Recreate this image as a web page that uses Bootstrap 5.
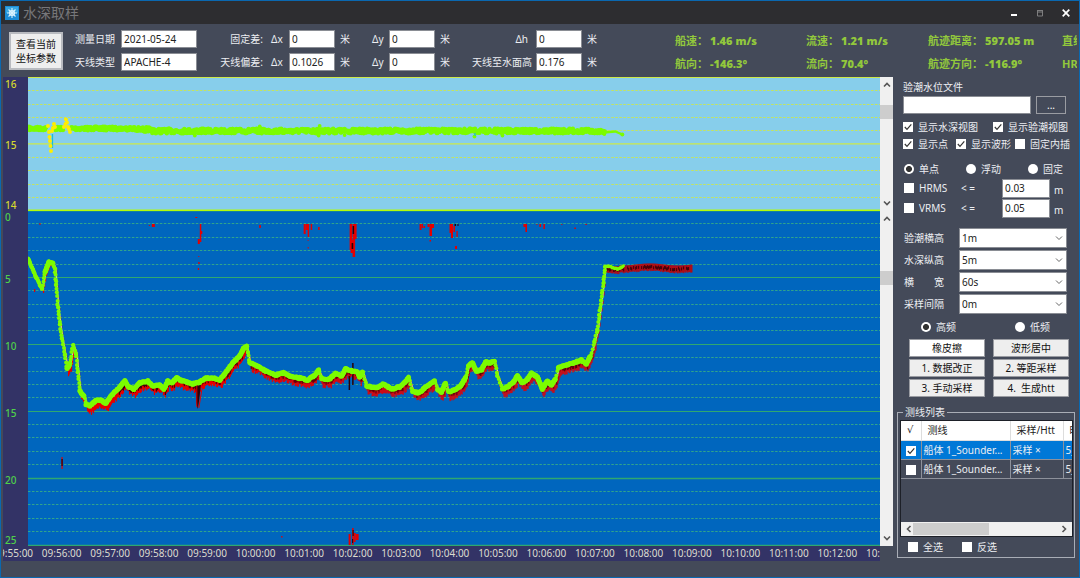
<!DOCTYPE html>
<html lang="zh-CN">
<head>
<meta charset="utf-8">
<meta name="viewport" content="width=device-width, initial-scale=1">
<title>水深取样</title>
<link href="https://cdn.jsdelivr.net/npm/bootstrap@5.3.0/dist/css/bootstrap.min.css" rel="stylesheet">
<style>
:root{--panel:#444a59;--axis:#333366;--edge:#0a68b0}
body{font:10px/12px "Noto Sans","Noto Sans CJK SC",sans-serif;color:#eceef2;background:var(--panel);border:1px solid var(--edge);min-height:100vh}
.titlebar{height:23px;background:#2d2d30;color:#77777a;font-size:14px}
.titlebar button{width:26px;height:22px}
.toolbar{height:53px;display:grid;grid-template-columns:54px 58px 76px 66px 26px 46px 37px 17px 46px 37px 64px 46px minmax(0,1fr);grid-template-rows:18px 18px;row-gap:5px;padding:6px 2px 0 8px;align-items:center;overflow:hidden}
.toolbar label{white-space:nowrap}
.unit{padding-left:5px}
.fld.form-control,.fld.form-select{font-size:10px;line-height:12px;height:18px;min-height:0;padding:0 2px;border:1px solid #8a8d94;border-radius:0;background-color:#fff;color:#222;min-width:0}
.fld.form-select{height:20px;background-image:url("data:image/svg+xml,%3Csvg xmlns='http://www.w3.org/2000/svg' viewBox='0 0 8 8'%3E%3Cpath d='M1 2.5 4 5.5 7 2.5' fill='none' stroke='%23666' /%3E%3C/svg%3E");background-size:8px 8px;background-position:right 3px center}
.winbtn{font-size:10px;line-height:14px;color:#111;background:#eee;border:1px solid #9a9ca2;padding:0;height:18px}
.multi{grid-row:1/3;height:38px;border:2px solid #b9bbc0}
.readout{grid-column:13;grid-row:1/3;display:flex;align-items:flex-start;align-self:start;overflow:hidden}
.units{display:grid;grid-template-rows:18px 18px;row-gap:5px;align-items:center;flex:none;width:90px;padding-left:5px}
.status{display:grid;grid-template-columns:131px 122px 134px 80px;grid-template-rows:22px 24px;margin-left:3px;align-items:center;color:#92c83c;font-size:11px;font-weight:700;white-space:nowrap}
.status b{margin-left:2px}
.work{display:grid;grid-template-columns:minmax(0,1fr) 186px}
.chart{display:grid;grid-template-columns:25px minmax(0,1fr) 13px;grid-template-rows:134fr 335fr 15px;padding-left:2px;min-height:0}
.chart svg.plot{width:100%;height:100%;display:block;min-height:0}
.yaxis{background:var(--axis);padding-left:2px;font-weight:500}
.tide{color:#d5d82e;padding-top:1px}
.deep{color:#4fd04a;display:grid;grid-template-rows:repeat(5,1fr)}
.deep div+div{margin-top:-5px}
.timeaxis{grid-column:1/3;background:var(--axis);overflow:hidden;color:#dcdccf}
.ticks{display:grid;grid-template-columns:repeat(19,1fr);margin:0 -30px 0 -14px;text-align:center;line-height:15px}
.vbar,.hbar{background:#f0f0f0}
.vbar svg,.hbar svg{width:8px;height:8px;fill:none;stroke:#555;stroke-width:1.6}
.vbar i{display:block;height:14px;background:#cdcdcd}
.side{padding:0 3px 0 10px}
.cells{display:flex;align-items:center;height:17px}
.radios{height:18px;padding-left:1px}
.band{height:24px;padding-left:18px}
.opt{display:flex;align-items:center;gap:5px;white-space:nowrap}
.opt .form-check-input,.lines .form-check-input{width:10px;height:10px;margin:0;flex:none;border:0;border-radius:0;background-color:#fff;background-size:10px 10px}
.opt .form-check-input[type=radio]{border-radius:50%}
.form-check-input[type=checkbox]:checked{background-image:url("data:image/svg+xml,%3Csvg xmlns='http://www.w3.org/2000/svg' viewBox='0 0 10 10'%3E%3Cpath d='M1.8 5 4 7.4 8.3 2.4' fill='none' stroke='%23333' stroke-width='1.2'/%3E%3C/svg%3E")}
.opt .form-check-input[type=radio]:checked{background-image:radial-gradient(#333 0 2.6px,#fff 3.4px)}
.rms{display:grid;grid-template-columns:58px 41px 48px 1fr;grid-auto-rows:20px;align-items:center}
.rms .opt{padding-left:1px}
.rms .fld{height:19px}
.picks{display:grid;grid-template-columns:55px 108px;grid-auto-rows:22px;align-items:center;margin:9px 0 0 1px}
.acts{display:grid;grid-template-columns:76px 76px;gap:2px 8px;margin-left:6px}
.lines{border:1px solid #a9adb6;margin:9px 0 0 -6px;padding:2px 1px 0 2px;width:178px}
.lines legend{float:none;width:auto;font-size:10px;line-height:12px;margin:0 0 0 3px;padding:0 2px}
.listbox{border:1px solid #1d2028;height:117px;overflow:hidden}
.listbox table{table-layout:fixed;width:260px;margin:0;color:#eceef2;border-collapse:collapse}
.listbox th,.listbox td{height:19px;padding:0 2px;border-right:1px solid #8d919b;border-bottom:1px solid #8d919b;white-space:nowrap;overflow:hidden}
.listbox th{background:#fff;color:#222;font-weight:400;border-color:#ddd;padding-left:6px}
.listbox th:first-child{font-family:"DejaVu Sans",sans-serif}
.listbox .cur td{background:#0078d7}
.hbar{height:14px}
.hbar i{width:76px;height:12px;background:#cdcdcd}
</style>
</head>
<body class="d-flex flex-column">
<header class="titlebar d-flex align-items-center">
  <svg class="ms-1 me-1" width="14" height="14" viewBox="0 0 14 14"><rect width="14" height="14" fill="#1b8bd6"/><rect x="1" y="1" width="12" height="6" fill="#37a6e2"/><g stroke="#d9f2ff" stroke-width="1.1" fill="none"><path d="M7 2v10M2 7h10M3.5 3.5l7 7M10.5 3.5l-7 7"/><circle cx="7" cy="7" r="2.5"/></g></svg>
  <span>水深取样</span>
  <div class="ms-auto d-flex">
    <button class="btn p-0 border-0 d-flex align-items-center justify-content-center" aria-label="最小化"><svg width="8" height="8"><path d="M1 6h6" stroke="#fff" stroke-width="2"/></svg></button>
    <button class="btn p-0 border-0 d-flex align-items-center justify-content-center" aria-label="最大化" disabled><svg width="8" height="8"><path d="M1 1.5h6M1.5 1v6h5V1M1 3h6" fill="none" stroke="#aaa"/></svg></button>
    <button class="btn p-0 border-0 d-flex align-items-center justify-content-center" aria-label="关闭"><svg width="8" height="8"><path d="M.7.7l6.6 6.6M7.3.7L.7 7.3" stroke="#fff" stroke-width="1.7"/></svg></button>
  </div>
</header>

<section class="toolbar">
  <button class="winbtn multi">查看当前<br>坐标参数</button>
  <label for="date" class="ps-2 ms-1">测量日期</label><input id="date" class="form-control fld" value="2021-05-24">
  <label for="fx" class="text-end">固定差:</label><label for="fx" class="ps-2">Δx</label><input id="fx" class="form-control fld" value="0"><span class="unit">米</span>
  <label for="fy">Δy</label><input id="fy" class="form-control fld" value="0"><span class="unit">米</span>
  <label for="fh" class="text-end pe-2">Δh</label><input id="fh" class="form-control fld" value="0">
  <label for="ant" class="ps-2 ms-1">天线类型</label><input id="ant" class="form-control fld" value="APACHE-4">
  <label for="ax" class="text-end">天线偏差:</label><label for="ax" class="ps-2">Δx</label><input id="ax" class="form-control fld" value="0.1026"><span class="unit">米</span>
  <label for="ay">Δy</label><input id="ay" class="form-control fld" value="0"><span class="unit">米</span>
  <label for="ah" class="text-end pe-1">天线至水面高</label><input id="ah" class="form-control fld" value="0.176">
  <div class="readout">
    <div class="units"><span>米</span><span>米</span></div>
    <div class="status">
      <span>船速：<b>1.46 m/s</b></span><span>流速：<b>1.21 m/s</b></span><span>航迹距离：<b>597.05 m</b></span><span>直线距离：</span>
      <span>航向：<b>-146.3°</b></span><span>流向：<b>70.4°</b></span><span>航迹方向：<b>-116.9°</b></span><span>HRMS：</span>
    </div>
  </div>
</section>

<main class="work flex-grow-1">
  <div class="chart">
    <div class="yaxis tide d-flex flex-column justify-content-between"><span>16</span><span>15</span><span>14</span></div>
    <svg class="plot" id="tide" viewBox="28 77 853 134" preserveAspectRatio="none"></svg>
    <div class="vbar d-flex flex-column align-items-center pt-1">
      <svg viewBox="0 0 8 8"><path d="M1 5.5 4 2.5 7 5.5"/></svg><i class="w-100 mt-3"></i><svg class="mt-auto mb-1" viewBox="0 0 8 8"><path d="M1 2.5 4 5.5 7 2.5"/></svg>
    </div>
    <div class="yaxis deep"><div>0</div><div>5</div><div>10</div><div>15</div><div class="d-flex flex-column justify-content-between"><span>20</span><span>25</span></div></div>
    <svg class="plot" id="deep" viewBox="28 211 853 335" preserveAspectRatio="none"></svg>
    <div class="vbar d-flex flex-column align-items-center pt-1">
      <svg viewBox="0 0 8 8"><path d="M1 5.5 4 2.5 7 5.5"/></svg><i class="w-100 mt-5"></i><svg class="mt-auto mb-1" viewBox="0 0 8 8"><path d="M1 2.5 4 5.5 7 2.5"/></svg>
    </div>
    <div class="timeaxis"><div class="ticks" id="ticks"></div></div>
    <div></div>
  </div>

  <aside class="side">
    <label for="file" class="cells" style="height:19px">验潮水位文件</label>
    <div class="d-flex"><input id="file" class="form-control fld" style="width:128px"><button class="winbtn text-white bg-transparent" style="width:30px;margin-left:5px">...</button></div>
    <div class="cells mt-1"><label class="opt" style="width:90px"><input class="form-check-input" type="checkbox" checked>显示水深视图</label><label class="opt"><input class="form-check-input" type="checkbox" checked>显示验潮视图</label></div>
    <div class="cells"><label class="opt" style="width:53px"><input class="form-check-input" type="checkbox" checked>显示点</label><label class="opt" style="width:59px"><input class="form-check-input" type="checkbox" checked>显示波形</label><label class="opt"><input class="form-check-input" type="checkbox">固定内插</label></div>
    <div class="cells radios mt-2"><label class="opt" style="width:62px"><input class="form-check-input" type="radio" name="mode" checked>单点</label><label class="opt" style="width:62px"><input class="form-check-input" type="radio" name="mode">浮动</label><label class="opt"><input class="form-check-input" type="radio" name="mode">固定</label></div>
    <div class="rms">
      <label class="opt"><input class="form-check-input" type="checkbox">HRMS</label><label for="hr">&lt; =</label><input id="hr" class="form-control fld" value="0.03"><span class="ps-1 pt-1">m</span>
      <label class="opt"><input class="form-check-input" type="checkbox">VRMS</label><label for="vr">&lt; =</label><input id="vr" class="form-control fld" value="0.05"><span class="ps-1 pt-1">m</span>
    </div>
    <div class="picks">
      <label for="s1">验潮横高</label><select id="s1" class="form-select fld"><option>1m</option></select>
      <label for="s2">水深纵高</label><select id="s2" class="form-select fld"><option>5m</option></select>
      <label for="s3">横　　宽</label><select id="s3" class="form-select fld"><option>60s</option></select>
      <label for="s4">采样间隔</label><select id="s4" class="form-select fld"><option>0m</option></select>
    </div>
    <div class="cells band"><label class="opt" style="width:94px"><input class="form-check-input" type="radio" name="freq" checked>高频</label><label class="opt"><input class="form-check-input" type="radio" name="freq">低频</label></div>
    <div class="acts">
      <button class="winbtn bg-white">橡皮擦</button><button class="winbtn">波形居中</button>
      <button class="winbtn">1. 数据改正</button><button class="winbtn">2. 等距采样</button>
      <button class="winbtn">3. 手动采样</button><button class="winbtn">4.&nbsp; 生成htt</button>
    </div>
    <fieldset class="lines">
      <legend>测线列表</legend>
      <div class="listbox d-flex flex-column">
        <table>
          <colgroup><col style="width:20px"><col style="width:89px"><col style="width:53px"><col></colgroup>
          <thead><tr><th>√</th><th>测线</th><th>采样/Htt</th><th>时间</th></tr></thead>
          <tbody>
            <tr class="cur"><td class="text-center"><input class="form-check-input align-middle" type="checkbox" checked aria-label="选择"></td><td>船体 1_Sounder...</td><td>采样 ×</td><td>5_</td></tr>
            <tr><td class="text-center"><input class="form-check-input align-middle" type="checkbox" aria-label="选择"></td><td>船体 1_Sounder...</td><td>采样 ×</td><td>5_</td></tr>
          </tbody>
        </table>
        <div class="hbar mt-auto d-flex align-items-center px-1">
          <svg viewBox="0 0 8 8"><path d="M5.5 1 2.5 4 5.5 7"/></svg><i></i><svg class="ms-auto" viewBox="0 0 8 8"><path d="M2.5 1 5.5 4 2.5 7"/></svg>
        </div>
      </div>
      <div class="cells ps-2" style="height:20px"><label class="opt" style="width:54px"><input class="form-check-input" type="checkbox">全选</label><label class="opt"><input class="form-check-input" type="checkbox">反选</label></div>
    </fieldset>
  </aside>
</main>
<footer style="height:16px"></footer>

<script src="https://cdn.jsdelivr.net/npm/bootstrap@5.3.0/dist/js/bootstrap.bundle.min.js"></script>
<script>
// repeatable noise so that the trace looks the same on each load
let seed = 7;
const rnd = () => (seed = seed * 16807 % 2147483647) / 2147483647;
const line = (y, c, w, dash) => `<path d="M28 ${y}H881" stroke="${c}" stroke-width="${w}"${dash ? ' stroke-dasharray="2.5 1.5"' : ''}/>`;
const dot = (x, y, r, c) => `<circle cx="${x}" cy="${y}" r="${r}" fill="${c}"/>`;
const GREEN = '#7cfc00';

// tide view
let s = '<rect x="28" y="77" width="853" height="134" fill="#87ceeb"/>';
const tideRows = [77.5, 90.5, 104.5, 117.5, 130.5, 143.8, 157.5, 170.5, 184.5, 197.5, 210.3];
tideRows.forEach((y, k) => {
  s += k % 5 ? line(y, '#c4e45c', 1, true) : line(y, k === 10 ? '#b4fa0a' : '#cde84a', k === 10 ? 1.8 : 1.2);
});
for (let x = 29; x < 606; x += .5) {
  if (x > 46 && x < 54 || x > 63 && x < 71) continue;
  const mid = x < 135 ? 128.5 : x < 150 ? 129.5 : x < 590 ? 131 : 131.5;
  s += dot(x, mid + (rnd() - .5) * (x < 135 ? 3.6 : x < 590 ? 4.6 : 3.4), 2.2, GREEN);
}
[[475,136.5],[195,135.5],[319,135.5],[320,126],[345,135],[503,135.5],[605,134],[260,126.5]].forEach(p => s += dot(...p, 1.9, GREEN));
s += `<path d="M604 132.5 616 131.5 623 134.5" stroke="${GREEN}" stroke-width="2.4" fill="none"/>` + dot(623, 134.5, 2, GREEN) + '<path d="M52.5 134v14M475.5 133v3" stroke="#19bfd6" stroke-width="1.3"/>';
[[48,126],[49,132],[49.5,137],[50,141],[50.5,146],[51,151],[52,131],[53,128],[54,124],[55,127],[64,127],[65.5,124],[66,119.5],[67,122.5],[68,127],[69,129],[70,132]].forEach(p => s += dot(...p, 2, '#ffee00'));
document.getElementById('tide').innerHTML = s;

// depth view
const depth = [[28,258],[33,270],[36,277],[42,289],[45,272],[49,262],[53,263],[55,269],[56,285],[58,308],[60,325],[62,338],[65,355],[67,369],[70,364],[73,345],[76,353],[78,372],[80,391],[84,396],[86,404],[90,406],[95,401],[100,400],[106,403],[113,394],[120,387],[125,381],[129,387],[134,389],[140,383],[148,381],[153,386],[160,385],[164,389],[168,381],[172,383],[177,378],[182,381],[187,382],[193,384],[200,382],[206,378],[214,378],[220,380],[224,375],[233,363],[240,356],[244,348],[247,346],[248,352],[250,363],[258,366],[266,371],[276,375],[284,373],[292,377],[300,378],[308,380],[314,376],[319,370],[322,379],[330,379],[336,373],[342,376],[346,369],[352,371],[358,372],[360,377],[363,372],[367,386],[376,388],[384,384],[392,389],[400,387],[405,383],[409,377],[413,391],[419,393],[424,389],[430,384],[435,381],[438,389],[442,392],[446,383],[449,392],[455,390],[461,386],[466,378],[469,366],[473,363],[477,371],[482,370],[486,362],[491,363],[495,361],[498,376],[503,389],[508,387],[514,382],[518,376],[523,383],[528,379],[532,373],[538,377],[543,389],[548,381],[552,385],[556,379],[559,368],[566,365],[574,363],[582,360],[587,364],[591,356],[595,342],[598,330],[600,315],[602,300],[604,283],[605.5,267],[609,266],[618,269],[624,266]];
s = '<rect x="28" y="211" width="853" height="335" fill="#0066be"/>';
s += line(211, '#2a9a80', 1);
for (let k = 1; k <= 25; k++) {
  const y = Math.floor(210.5 + k * 13.38) + .5;
  s += k % 5 ? line(y, '#30a58c', 1, true) : line(y, '#2fa870', k > 19 ? 1.6 : 1.2);
}
const rect = (x, y, w, h, c) => `<rect x="${x}" y="${y}" width="${w}" height="${h}" fill="${c}"/>`;
const RED = '#e60000', DARK = '#2a0008';
const at = x => { let i = 1; while (i < depth.length - 1 && depth[i][0] < x) i++; const [a, b] = [depth[i - 1], depth[i]]; return a[1] + (b[1] - a[1]) * (x - a[0]) / (b[0] - a[0]); };
// echo under the bottom trace
for (let x = 36; x < 606; x++) {
  const y = at(x - 1), shallow = y < 340;
  s += rect(x, y, 1.2, shallow ? 4 : 6 + rnd() * 3.5, RED);
  if (!shallow && x > 118 && rnd() > .35) s += rect(x, y + 1, 1.1, 2 + rnd() * 3, DARK);
}
for (let x = 606; x < 693; x++) {
  const y = 268 + Math.sin((x - 636) / 9) * -1 + (x < 620 ? 1 : 0);
  s += rect(x, y - 3.5, 1.2, 6.5 + rnd() * 1.5, '#c80000') + (rnd() > .35 ? rect(x, y - 2.5 + rnd() * 2, 1.2, 3, DARK) : '');
}
// isolated echoes
s += `<path d="M195.500 381h6l-2 18-1.500 10-1.500-6z" fill="${DARK}"/><path d="M199 408l3-18 4-5-7-2M197 385v22" fill="none" stroke="${RED}" stroke-width="1"/>`;
s += rect(352.500, 363, 1.5, 22, DARK) + rect(349, 376, 1.5, 14, DARK);
[[39.5,223,1,2],[34,289,1.2,3],[149,225,1,1],[152,224,3,3],[195.500,217,2,1],[200,224,1.500,18],[198,239,2,5],[201,231,1.500,3],[198.500,256,1,1],[198.500,262,1.3,2],[198,268,1.300,2],[259.500,225,1.600,3],[304,224,2,10],[306,224,2.500,6],[308,224,1.500,13],[311,224,1.500,6],[308,240,.8,1],[308,247,1,1.500],[318.500,227,1.500,3],[350,224,2.500,26],[351,240,3.500,13],[353,224,2.500,33],[355,224,2,15],[420,224,2,6],[422,224,1.500,4],[424,226,1.500,2],[428,224,2,3],[430,224,2.500,12],[432,224,2.500,4],[430,240,1.500,1.500],[450,224,1.500,9],[451.500,224,2,14],[454,226,1.500,6],[457,231,1.200,6],[455.500,246,2,3],[524,224,2.500,3],[526,224,1.600,8],[537,224,1,1],[540,224,1.600,3],[544,224,1.500,5],[562,224,1,1],[575,227.500,1.500,1.500],[586,224,1.500,1],[61.500,457,1.200,12],[281.500,536,1.300,1.500],[349,534,2,11],[352.500,528,1.500,17],[354,533,2,9],[356,534,3,6]].forEach(r => s += rect(...r, RED));
[[353,226,1.500,8],[352,243,1.600,6],[455,224,1.500,2],[458,224,1,2],[61.500,459,1.200,7],[353,530,1,6],[352.500,539,1,4]].forEach(r => s += rect(...r, DARK));
// pale joining line, then the picked points
s += `<polyline points="${depth.map(p => [p[0] + 1, p[1]]).join(' ')}" fill="none" stroke="#e8c8b0" stroke-width="1.3"/>`;
for (let i = 1; i < depth.length; i++) {
  const [a, b] = [depth[i - 1], depth[i]], len = Math.hypot(b[0] - a[0], b[1] - a[1]);
  const steep = Math.abs(b[1] - a[1]) > 2.5 * (b[0] - a[0]), n = Math.ceil(len / (steep ? 4 : 1));
  for (let j = 0; j <= n; j++) s += dot(a[0] + (b[0] - a[0]) * j / n + (steep ? (rnd() - .5) * .8 : 0), a[1] + (b[1] - a[1]) * j / n + (rnd() - .5) * 1.4, b[0] > 607 ? 1.600 : steep || b[0] < 47 ? 2 : 2.500, GREEN);
}
document.getElementById('deep').innerHTML = s;

document.getElementById('ticks').innerHTML = Array.from({length: 19}, (_, i) => {
  const m = 55 + i;
  return `<span>${m < 60 ? '09' : '10'}:${String(m % 60).padStart(2, '0')}:00</span>`;
}).join('');
</script>
</body>
</html>
